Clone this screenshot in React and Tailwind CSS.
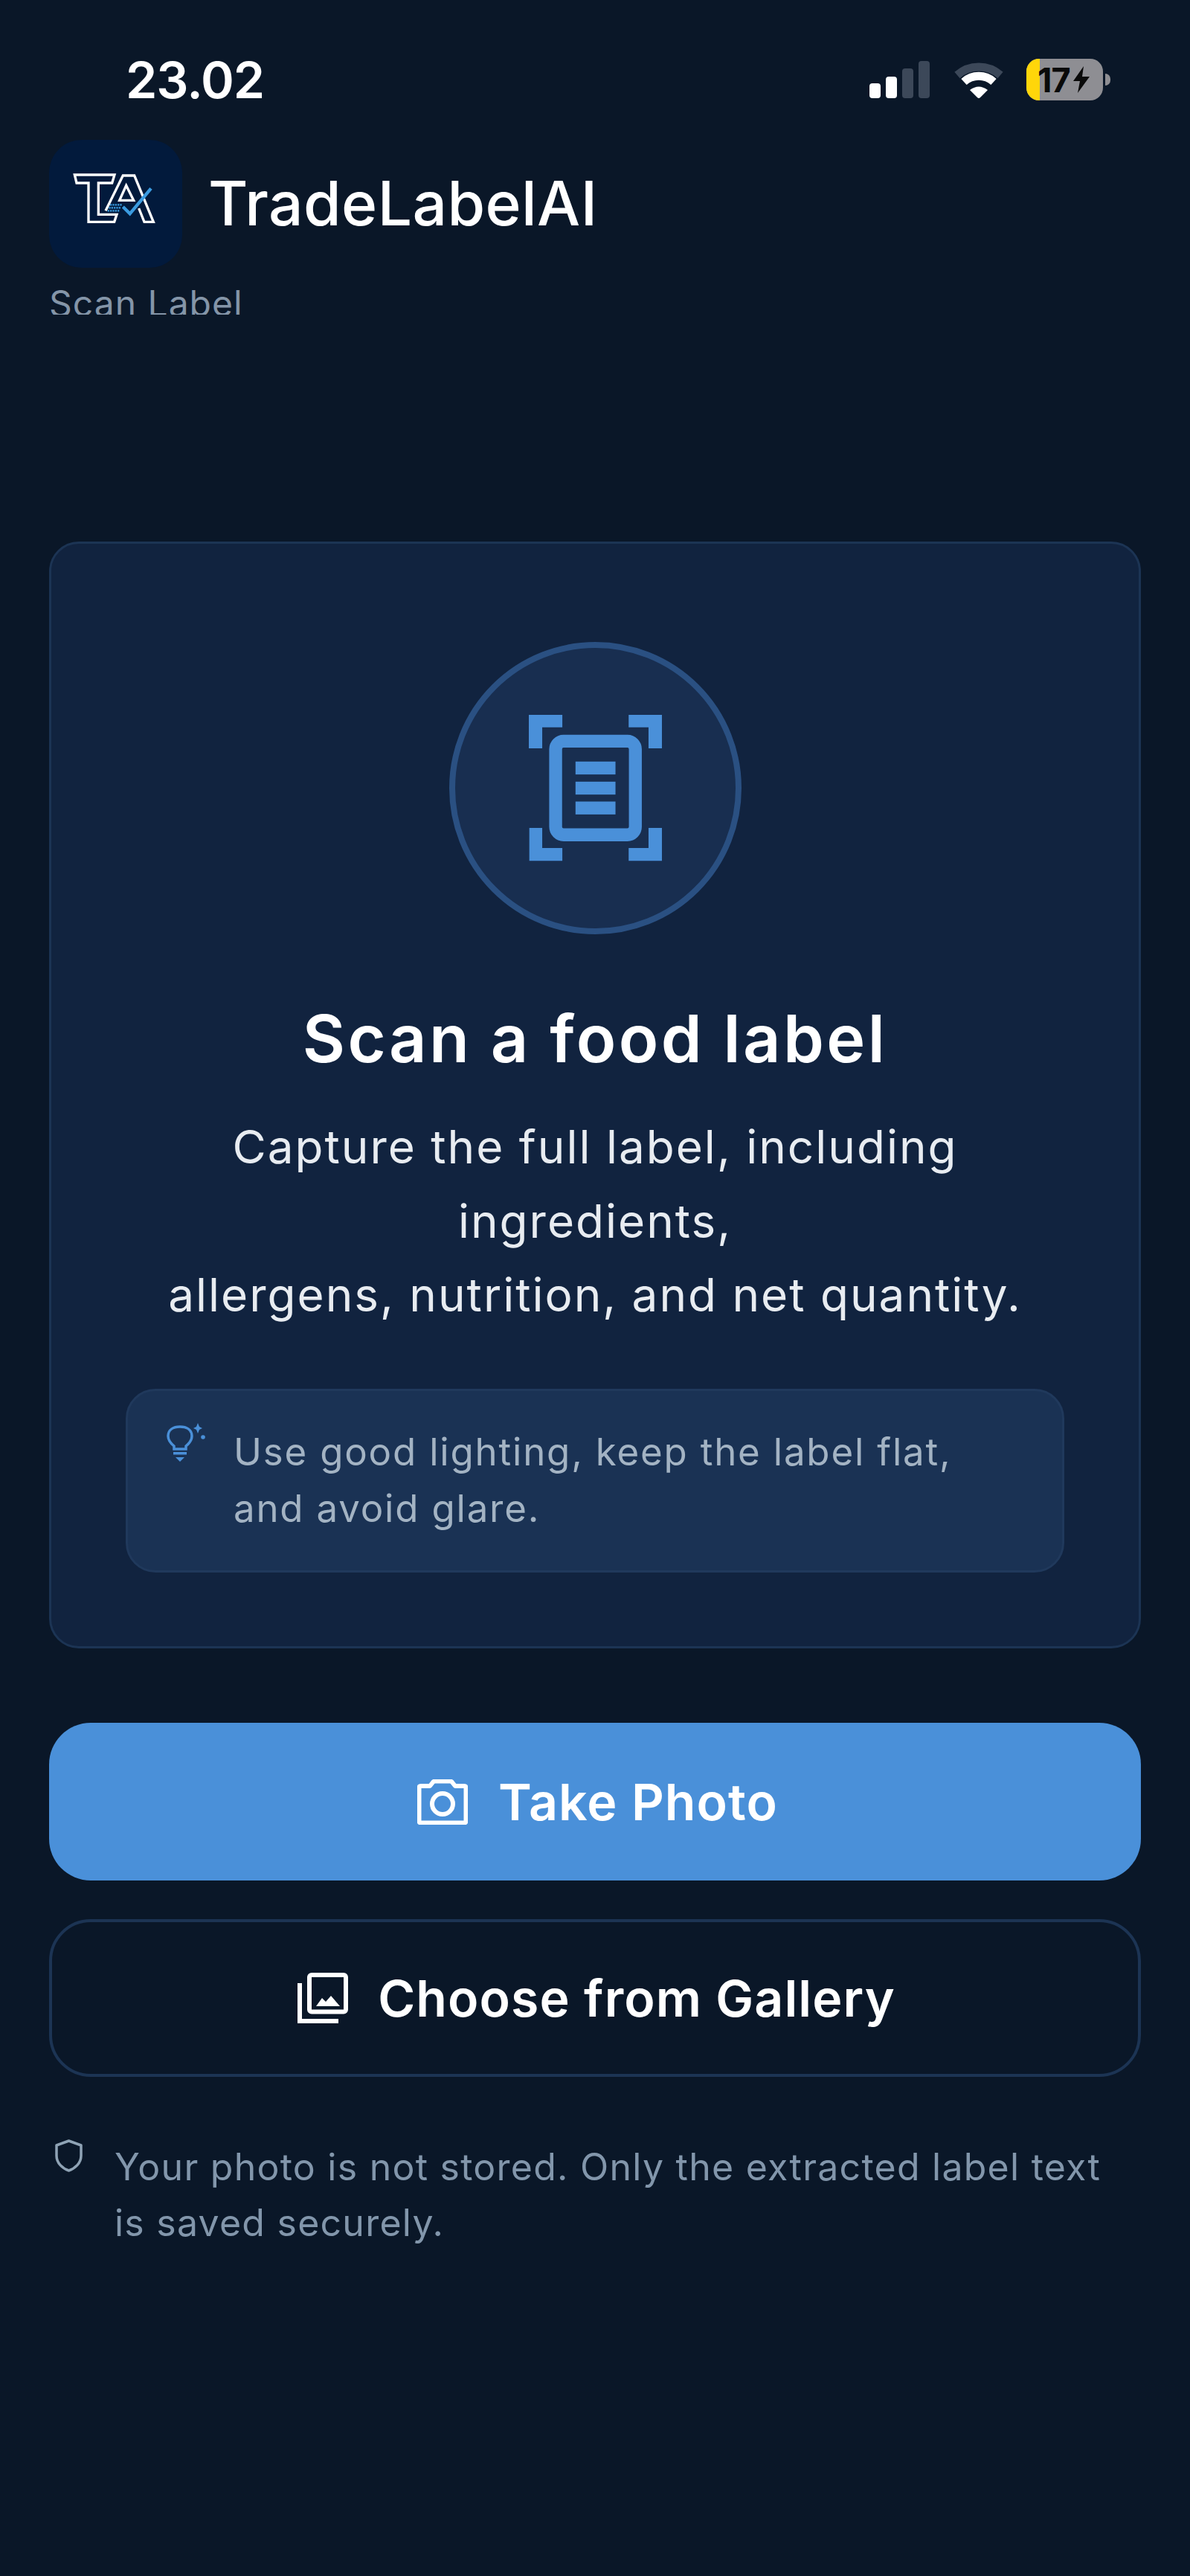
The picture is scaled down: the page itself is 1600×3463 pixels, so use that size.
import React from "react";

function SignalBars() {
  return (
    <div className="flex items-end gap-[7px] h-[50px]">
      <div className="w-[15px] h-[20px] rounded-[4px] bg-white" />
      <div className="w-[15px] h-[29px] rounded-[4px] bg-white" />
      <div className="w-[15px] h-[40px] rounded-[4px] bg-[#3c4859]" />
      <div className="w-[15px] h-[50px] rounded-[4px] bg-[#3c4859]" />
    </div>
  );
}

function WifiIcon() {
  return (
    <svg width="68" height="50" viewBox="0 0 68 50" fill="none">
      <path d="M5 19A44 44 0 0 1 63 19" stroke="#3c4859" strokeWidth="11" />
      <path d="M14 28A30 30 0 0 1 54 28" stroke="#fff" strokeWidth="11" />
      <path d="M22 39Q34 30 46 39L36 49Q34 51 32 49Z" fill="#fff" />
    </svg>
  );
}

function Battery() {
  return (
    <div className="flex items-center gap-[3px]">
      <div className="relative w-[103px] h-[56px] rounded-[17px] overflow-hidden bg-[#8e8e93]">
        <div className="absolute left-0 top-0 bottom-0 w-[18px] bg-[#ffd60a]" />
        <div className="absolute inset-0 flex items-center pl-[15px] gap-[3px]">
          <span className="font-['Inter',sans-serif] font-bold text-[45px] leading-none tracking-[-1px] text-[#0a0a0a]">17</span>
          <svg width="24" height="36" viewBox="0 0 24 36" fill="#0a0a0a">
            <path d="M15 0 1 20h9L7 36 23 14h-10z" />
          </svg>
        </div>
      </div>
      <div className="w-[7px] h-[16px] rounded-r-full bg-[#8e8e93]" />
    </div>
  );
}

function StatusBar() {
  return (
    <div className="flex justify-between items-center h-[188px] pt-[26px] pl-[169px] pr-[107px]">
      <span className="font-['Inter',sans-serif] font-semibold text-[68px] leading-none text-white tracking-[-1px]">23.02</span>
      <div className="flex items-center">
        <SignalBars />
        <div className="ml-[32px] mr-[30px]"><WifiIcon /></div>
        <Battery />
      </div>
    </div>
  );
}

// TA monogram with the blue check
function LogoMark() {
  return (
    <svg width="179" height="172" viewBox="84 54 537 516" fill="none">
      <path d="M187 195H348L338 228H283V355H357L347 385H243V228H195Z" stroke="#fff" strokeWidth="10" strokeLinejoin="miter" />
      <path d="M312 340L382 198H428L505 385H468L446 330" stroke="#fff" strokeWidth="10" />
      <path d="M395 238L425 298H368Z" stroke="#fff" strokeWidth="10" />
      <path d="M330 316H378M325 328H375M320 340H370" stroke="#3b9be0" strokeWidth="7" strokeDasharray="7 3" />
      <path d="M382 324L410 352L495 250" stroke="#3b9be0" strokeWidth="13" />
    </svg>
  );
}

function ScanDocIcon() {
  return (
    <svg width="179" height="197" viewBox="393 363 536 590" fill="#4a90d9">
      <path d="M393 363H528V413H447V498H393Z" />
      <path d="M795 363H929V498H875V413H795Z" />
      <path d="M395 818H447V899H528V951H395Z" />
      <path d="M875 818H929V951H795V899H875Z" />
      <rect x="501" y="469" width="321" height="377" rx="32" fill="none" stroke="#4a90d9" strokeWidth="52" />
      <rect x="581" y="551" width="161" height="52" />
      <rect x="581" y="632" width="161" height="52" />
      <rect x="581" y="712" width="161" height="52" />
    </svg>
  );
}

function BulbIcon() {
  return (
    <svg width="54" height="54" viewBox="0 0 54 54" fill="none">
      <path d="M10 31C4 26 2 21 2 17.5C2 9 9 5 18 5C27 5 34 9 34 17.5C34 21 32 26 26 31V35H10Z" stroke="#4a90d9" strokeWidth="3.5" />
      <rect x="9" y="39" width="18" height="3.5" fill="#4a90d9" />
      <path d="M12 46H24L18 52Z" fill="#4a90d9" />
      <path d="M42 0L44 5L48 7L44 9L42 14L40 9L36 7L40 5Z" fill="#4a90d9" />
      <circle cx="49" cy="19" r="2.8" fill="#4a90d9" />
    </svg>
  );
}

function CameraIcon() {
  return (
    <svg width="68" height="61" viewBox="0 0 68 61" fill="none" stroke="#fff" strokeWidth="6">
      <path d="M5 9H17L21 4Q22 2.5 24 2.5H44Q46 2.5 47 4L51 9H63Q65.5 9 65.5 11.5V56Q65.5 58.5 63 58.5H5Q2.5 58.5 2.5 56V11.5Q2.5 9 5 9Z" strokeLinejoin="round" />
      <circle cx="34" cy="33" r="14" />
    </svg>
  );
}

function GalleryIcon() {
  return (
    <svg width="68" height="68" viewBox="0 0 68 68" fill="none" stroke="#fff" strokeWidth="6">
      <rect x="16" y="3" width="49" height="49.5" rx="3" />
      <path d="M3 14V65H55" />
      <path d="M25 45L33 34L38 39L45 31L57 45Z" fill="#fff" stroke="none" />
    </svg>
  );
}

function ShieldIcon() {
  return (
    <svg width="37" height="44" viewBox="0 0 37 44" fill="none" className="shrink-0 mt-[-2px]">
      <path d="M18.5 2L35 8V22C35 32 27 39 18.5 42C10 39 2 32 2 22V8Z" stroke="#8fa3b5" strokeWidth="3.5" strokeLinejoin="round" />
    </svg>
  );
}

export default function App() {
  return (
    <div className="w-[1600px] h-[3463px] bg-[#0a1728] font-['Inter',sans-serif] text-white overflow-hidden">
      <StatusBar />

      <div className="px-[66px]">
        <div className="flex items-center gap-[35px]">
          <div className="w-[179px] h-[172px] rounded-[44px] bg-[#021a3c] shrink-0">
            <LogoMark />
          </div>
          <h1 className="font-medium text-[82px] leading-none tracking-[0.4px]">TradeLabelAI</h1>
        </div>
        <div className="h-[42px] mt-[21px] overflow-hidden">
          <p className="text-[48px] leading-[54px] text-[#8495a8] tracking-[1px]">Scan Label</p>
        </div>

        <div className="mt-[305px] h-[1488px] rounded-[40px] border-[3px] border-[#1c3454] bg-[#11233f] flex flex-col items-center pt-[132px] px-[100px]">
          <div className="w-[393px] h-[393px] rounded-full border-[8px] border-[#2a5082] bg-[#182e50] flex items-center justify-center shrink-0">
            <ScanDocIcon />
          </div>
          <h2 className="mt-[86px] font-semibold text-[88px] leading-[108px] tracking-[3.4px]">Scan a food label</h2>
          <p className="mt-[42px] text-[62px] leading-[99.5px] text-center text-[#e8ecf1] tracking-[2px]">
            Capture the full label, including ingredients,
            <br />
            allergens, nutrition, and net quantity.
          </p>
          <div className="mt-[76px] w-[1262px] h-[247px] rounded-[40px] border-[3px] border-[#20395c] bg-[#1a3254] flex gap-[36px] pl-[52px] pt-[43px] shrink-0">
            <div className="shrink-0"><BulbIcon /></div>
            <p className="text-[51px] leading-[76px] text-[#a3b3c3] tracking-[1.8px] w-[1040px] mt-[1px]">
              Use good lighting, keep the label flat,
              <br />
              and avoid glare.
            </p>
          </div>
        </div>

        <button className="mt-[100px] w-full h-[212px] rounded-[56px] bg-[#4a90d9] flex items-center justify-center gap-[41px] pl-[7px] font-semibold text-[68px] tracking-[1.1px]">
          <CameraIcon />
          Take Photo
        </button>
        <button className="mt-[52px] w-full h-[212px] rounded-[56px] border-[4px] border-[#1c3454] flex items-center justify-center gap-[40px] pl-[4px] font-semibold text-[68px] tracking-[1.1px]">
          <GalleryIcon />
          Choose from Gallery
        </button>

        <div className="mt-[86px] flex gap-[43px] pl-[8px]">
          <ShieldIcon />
          <p className="text-[50px] leading-[75px] text-[#8296ab] tracking-[1.25px] -mt-[2px]">
            Your photo is not stored. Only the extracted label text
            <br />
            is saved securely.
          </p>
        </div>
      </div>
    </div>
  );
}
